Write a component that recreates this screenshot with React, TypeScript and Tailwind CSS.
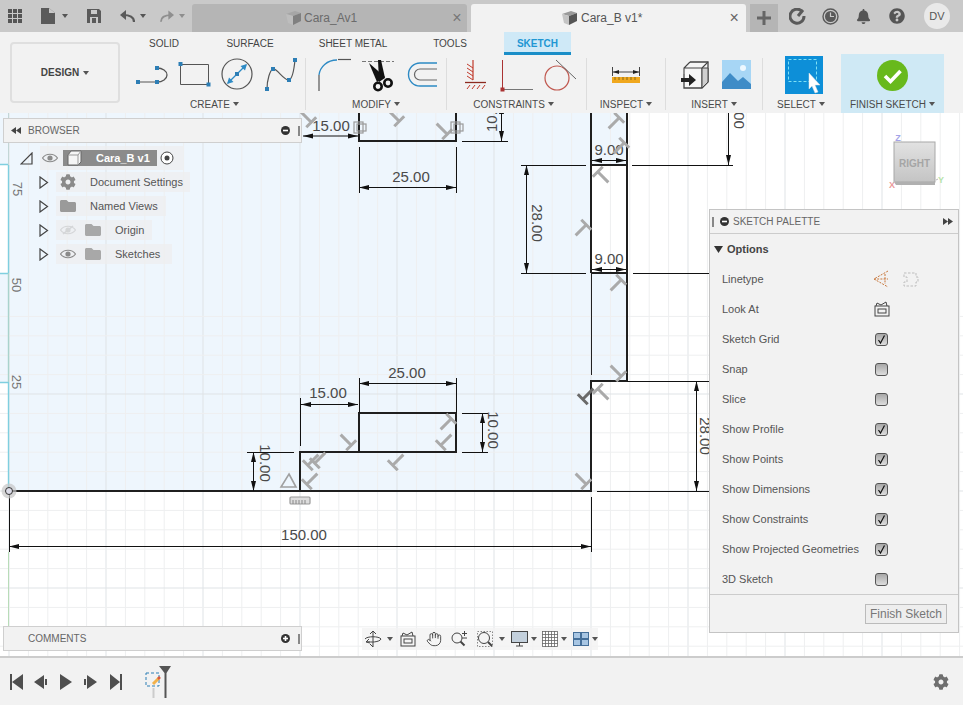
import { Hand } from "lucide-react";
import { FaBell, FaCog, FaQuestionCircle, FaFolder } from "react-icons/fa";

const font = { fontFamily: '"Liberation Sans", Arial, sans-serif' };

function Caret({ className = "" }: { className?: string }) {
  return (
    <svg width="6" height="4" viewBox="0 0 6 4" className={className}>
      <path d="M0 0H6L3 4Z" fill="#555" />
    </svg>
  );
}

function Cube({ dim = false }: { dim?: boolean }) {
  return (
    <svg width="17" height="16" viewBox="0 0 17 16" opacity={dim ? 0.55 : 1}>
      <path d="M1 4L10 1L16 3L8 6Z" fill="#9a9a9a" />
      <path d="M1 4L8 6V15L3 13Z" fill="#c4c4c4" />
      <path d="M8 6L16 3V11L8 15Z" fill="#555" />
    </svg>
  );
}

function Node({ x, y }: { x: number; y: number }) {
  return <rect x={x - 2} y={y - 2} width="4" height="4" fill="#2d7eb5" />;
}

/* ---------- ribbon ---------- */

function RibbonGroup({
  className,
  labelClass = "",
  label,
  children,
}: {
  className: string;
  labelClass?: string;
  label: string;
  children: React.ReactNode;
}) {
  return (
    <div className={"my-[3px] border-r border-[#dddddd] " + className}>
      <div className="flex h-[34px]">{children}</div>
      <div className={"mt-[5px] flex h-[14px] items-center justify-center gap-[3px] text-[10px] text-[#4a4a4a] " + labelClass}>
        {label}
        <Caret />
      </div>
    </div>
  );
}

function LineArcIcon() {
  return (
    <svg width="34" height="34" viewBox="0 0 34 34" fill="none">
      <path d="M3 24H22" stroke="#555" />
      <path d="M22 10A10 7 0 0 1 22 24" stroke="#555" strokeWidth="1.3" />
      <Node x={3} y={24} />
      <Node x={22} y={24} />
      <Node x={22} y={10} />
    </svg>
  );
}

function RectIcon() {
  return (
    <svg width="34" height="34" viewBox="0 0 34 34" fill="none">
      <path d="M2.5 6.5H30.5V26.5H2.5Z" stroke="#555" />
      <Node x={2.5} y={6} />
      <Node x={30.5} y={26.5} />
    </svg>
  );
}

function CircleIcon() {
  return (
    <svg width="34" height="34" viewBox="0 0 34 34" fill="none">
      <circle cx="16" cy="16" r="15" stroke="#555" strokeWidth="1.2" />
      <path d="M7 25L25 7" stroke="#2d8ac4" strokeWidth="1.3" />
      <path d="M26 6L19.5 8L24 12.5ZM6 26L12.5 24L8 19.5Z" fill="#2d8ac4" />
      <Node x={16} y={16} />
    </svg>
  );
}

function SplineIcon() {
  return (
    <svg width="34" height="34" viewBox="0 0 34 34" fill="none">
      <path d="M3 31C3 22 6 12 9 11C13 10 20 23 25 22C28 21 30 12 31 2" stroke="#555" strokeWidth="1.2" />
      <Node x={3} y={31} />
      <Node x={9} y={11} />
      <Node x={25} y={22} />
      <Node x={31} y={2} />
    </svg>
  );
}

function FilletIcon() {
  return (
    <svg width="34" height="34" viewBox="0 0 34 34" fill="none">
      <path d="M1 33V17" stroke="#555" strokeWidth="1.2" />
      <path d="M1 17C2 9 9 2 19 2" stroke="#2d8ac4" strokeWidth="1.3" />
      <path d="M20 1.5H33" stroke="#555" strokeWidth="1.2" />
    </svg>
  );
}

function ScissorsIcon() {
  return (
    <svg width="34" height="34" viewBox="0 0 34 34" fill="none">
      <path d="M0 3.5H32" stroke="#777" strokeDasharray="4 2" />
      <path d="M16 2H19L23 20L17 24Z" fill="#111" />
      <path d="M7 5L23 19L15 24Z" fill="#111" />
      <circle cx="16" cy="28.5" r="3.7" stroke="#111" strokeWidth="2.6" />
      <circle cx="26" cy="25" r="3.7" stroke="#111" strokeWidth="2.6" />
    </svg>
  );
}

function OffsetIcon() {
  return (
    <svg width="34" height="34" viewBox="0 0 34 34" fill="none">
      <path d="M31 5H14A11.5 11.5 0 0 0 14 28H31" stroke="#2d8ac4" strokeWidth="1.4" />
      <path d="M31 11H14A5.5 5.5 0 0 0 14 22H31" stroke="#666" strokeWidth="1.2" />
    </svg>
  );
}

function CoincidentIcon() {
  return (
    <svg width="26" height="34" viewBox="0 0 26 34" fill="none" stroke="#c0392b">
      <path d="M11 2V22" strokeWidth="1.2" />
      <path d="M5 6L11 10M5 10L11 14M5 14L11 18M5 18L11 22" />
      <path d="M3 24.5H24" stroke="#8c2a20" strokeWidth="1.3" />
      <path d="M5 31L8 27M10 31L13 27M15 31L18 27M20 31L23 27" />
    </svg>
  );
}

function PerpendicularIcon() {
  return (
    <svg width="34" height="34" viewBox="0 0 34 34" fill="none">
      <path d="M3.5 2V32" stroke="#a33" />
      <path d="M3.5 31.5H34" stroke="#777" />
      <rect x="1.5" y="29.5" width="4" height="4" fill="#a33" />
    </svg>
  );
}

function TangentIcon() {
  return (
    <svg width="34" height="34" viewBox="0 0 34 34" fill="none">
      <circle cx="13" cy="20" r="12" stroke="#c0584f" strokeWidth="1.2" />
      <path d="M12 2L32 21" stroke="#666" />
    </svg>
  );
}

function RulerIcon() {
  return (
    <svg width="30" height="34" viewBox="0 0 30 34" fill="none">
      <path d="M1.5 9V18M28.5 9V18" stroke="#444" />
      <path d="M2 14H28" stroke="#444" />
      <path d="M2 14L8 12V16ZM28 14L22 12V16Z" fill="#222" />
      <rect x="1" y="19" width="28" height="6" fill="#f0a81e" />
      <path d="M4 19V22M8 19V22M12 19V22M16 19V22M20 19V22M24 19V22" stroke="#8a6a12" />
    </svg>
  );
}

function InsertIcon() {
  return (
    <svg width="30" height="34" viewBox="0 0 30 34" fill="none">
      <path d="M10 4H28V24L22 30H4V16" fill="#f6f6f6" stroke="#444" strokeWidth="1.3" />
      <path d="M10 4L4 10V16M4 10H22V30M22 10L28 4" stroke="#444" strokeWidth="1.1" fill="none" />
      <path d="M22 10H28V24L22 30Z" fill="#cfcfcf" stroke="#444" />
      <path d="M1 20H9V16L16 22L9 28V24H1Z" fill="#222" />
    </svg>
  );
}

function ImageIcon() {
  return (
    <svg width="30" height="34" viewBox="0 0 30 34">
      <rect x="0" y="2" width="29" height="29" fill="#a7d6f5" />
      <circle cx="21" cy="10" r="3" fill="#eef8ff" />
      <path d="M0 24L8 15L16 23L21 19L29 26V31H0Z" fill="#3f8cc7" />
    </svg>
  );
}

function SelectIcon() {
  return (
    <svg width="38" height="38" viewBox="0 0 38 38">
      <rect width="38" height="38" fill="#0d8fd8" />
      <rect x="3.5" y="3.5" width="28" height="22" fill="none" stroke="#7fe0f5" strokeDasharray="3 2" />
      <path d="M24 17L35 29H30L33 36L30 37L27 30L24 33Z" fill="#fff" stroke="#ddd" strokeWidth=".5" />
    </svg>
  );
}

function Ribbon() {
  return (
    <div className="flex h-[81px] shrink-0 bg-[#f2f2f2]">
      <div className="w-[131px] shrink-0 pl-[10px] pt-[10px]">
        <div className="flex h-[61px] w-[110px] items-center justify-center gap-[4px] rounded-[4px] border-2 border-[#dfdfdf] text-[10px] font-bold text-[#444]">
          DESIGN
          <Caret />
        </div>
      </div>
      <div className="flex flex-col">
        <div className="flex h-[23px] text-[10px] text-[#444]">
          <div className="flex w-[66px] items-center justify-center">SOLID</div>
          <div className="flex w-[106px] items-center justify-center">SURFACE</div>
          <div className="flex w-[100px] items-center justify-center">SHEET METAL</div>
          <div className="flex w-[94px] items-center justify-center">TOOLS</div>
          <div className="ml-[7px] flex w-[67px] items-center justify-center border-b-[3px] border-[#1a8ec8] bg-[#cfe9f7] pt-[2px] font-bold text-[#1f97d3]">
            SKETCH
          </div>
        </div>
        <div className="flex h-[58px]">
          <RibbonGroup className="w-[175px]" labelClass="pr-[7px]" label="CREATE">
            <div className="flex gap-[9px] pl-[4px]">
              <LineArcIcon />
              <RectIcon />
              <CircleIcon />
              <SplineIcon />
            </div>
          </RibbonGroup>
          <RibbonGroup className="w-[141px]" label="MODIFY">
            <div className="flex gap-[10px] pl-[12px]">
              <FilletIcon />
              <ScissorsIcon />
              <OffsetIcon />
            </div>
          </RibbonGroup>
          <RibbonGroup className="w-[140px]" labelClass="pr-[6px]" label="CONSTRAINTS">
            <div className="flex gap-[11px] pl-[15px]">
              <CoincidentIcon />
              <PerpendicularIcon />
              <TangentIcon />
            </div>
          </RibbonGroup>
          <RibbonGroup className="w-[79px]" label="INSPECT">
            <div className="flex w-full justify-center">
              <RulerIcon />
            </div>
          </RibbonGroup>
          <RibbonGroup className="w-[97px]" label="INSERT">
            <div className="flex gap-[12px] pl-[14px]">
              <InsertIcon />
              <ImageIcon />
            </div>
          </RibbonGroup>
          <div className="my-[1px] w-[78px]">
            <div className="flex h-[38px] justify-center pl-[3px]">
              <SelectIcon />
            </div>
            <div className="mt-[3px] flex h-[14px] items-center justify-center gap-[3px] pr-[2px] text-[10px] text-[#4a4a4a]">
              SELECT
              <Caret />
            </div>
          </div>
          <div className="-mt-px w-[103px] bg-[#cfe9f5]">
            <div className="flex h-[37px] items-end justify-center">
              <svg width="31" height="31" viewBox="0 0 31 31">
                <circle cx="15.5" cy="15.5" r="15.5" fill="#68b91c" />
                <path d="M8 16L13.5 21.5L23.5 11" fill="none" stroke="#fff" strokeWidth="3.6" />
              </svg>
            </div>
            <div className="mt-[6px] flex h-[14px] items-center justify-center gap-[3px] text-[10px] text-[#4a4a4a]">
              FINISH SKETCH
              <Caret />
            </div>
          </div>
        </div>
      </div>
    </div>
  );
}

/* ---------- top bar ---------- */

function TopBar() {
  return (
    <div className="flex h-8 shrink-0 bg-[#c9c9c9]">
      <div className="flex w-[192px] shrink-0 items-center">
        <svg width="15" height="15" viewBox="0 0 15 15" className="ml-[8px]" fill="#555">
          {[0, 5, 10].map((x) =>
            [0, 5, 10].map((y) => <rect key={x + "-" + y} x={x} y={y} width="4" height="4" />)
          )}
        </svg>
        <svg width="14" height="16" viewBox="0 0 14 16" className="ml-[18px]">
          <path d="M0 0H8L14 5V16H0Z" fill="#5a5a5a" />
          <path d="M8 0V5H14Z" fill="#c9c9c9" />
        </svg>
        <Caret className="ml-[7px]" />
        <svg width="14" height="14" viewBox="0 0 14 14" className="ml-[19px]">
          <path d="M0 0H12L14 2V14H0Z" fill="#5a5a5a" />
          <rect x="4" y="1" width="6" height="4" fill="#c9c9c9" />
          <rect x="3" y="8" width="8" height="6" fill="#c9c9c9" />
          <rect x="5" y="9" width="4" height="5" fill="#5a5a5a" />
        </svg>
        <svg width="15" height="13" viewBox="0 0 15 13" fill="none" className="ml-[19px]">
          <path d="M14 12C14 7 10 5 3 5" stroke="#5a5a5a" strokeWidth="2.2" />
          <path d="M6 0L0 5L6 10Z" fill="#5a5a5a" />
        </svg>
        <Caret className="ml-[5px]" />
        <svg width="14" height="13" viewBox="0 0 15 13" fill="none" className="ml-[14px]">
          <path d="M1 12C1 7 5 5 12 5" stroke="#8f8f8f" strokeWidth="2" />
          <path d="M9 0L15 5L9 10Z" fill="#8f8f8f" />
        </svg>
        <Caret className="ml-[5px] opacity-50" />
      </div>
      <div className="mt-[4px] flex w-[275px] items-center rounded-t-[3px] bg-[#b5b5b5] pl-[93px] text-[12px] text-[#6b6b6b]">
        <Cube dim />
        <span className="ml-[2px]">Cara_Av1</span>
        <span className="ml-[95px] text-[16px] leading-none text-[#777]">×</span>
      </div>
      <div className="ml-[4px] mt-[4px] flex w-[275px] items-center rounded-t-[3px] bg-[#f2f2f2] pl-[90px] text-[12px] text-[#555]">
        <Cube />
        <span className="ml-[3px]">Cara_B v1*</span>
        <span className="ml-[87px] text-[16px] leading-none text-[#666]">×</span>
      </div>
      <div className="ml-[4px] mt-[4px] flex h-[28px] w-[28px] items-center justify-center bg-[#b5b5b5]">
        <svg width="14" height="14" viewBox="0 0 14 14">
          <path d="M5.5 0H8.5V5.5H14V8.5H8.5V14H5.5V8.5H0V5.5H5.5Z" fill="#666" />
        </svg>
      </div>
      <div className="ml-[3px] flex items-center">
        <div className="flex w-[33px] justify-center">
          <svg width="17" height="17" viewBox="0 0 17 17" fill="none">
            <path d="M12.5 2.8A7 7 0 1 0 15 8" stroke="#5a5a5a" strokeWidth="3" />
            <path d="M9 8L14 2" stroke="#5a5a5a" strokeWidth="3" />
          </svg>
        </div>
        <div className="flex w-[33px] justify-center">
          <svg width="17" height="17" viewBox="0 0 17 17" fill="none">
            <circle cx="8.5" cy="8.5" r="7.5" stroke="#5a5a5a" strokeWidth="1.4" />
            <circle cx="8.5" cy="8.5" r="5.5" fill="#5a5a5a" />
            <path d="M8.5 4.5V8.5H12" stroke="#c9c9c9" strokeWidth="1.2" />
          </svg>
        </div>
        <div className="flex w-[33px] justify-center">
          <FaBell size={15} color="#555" />
        </div>
        <div className="flex w-[33px] justify-center">
          <FaQuestionCircle size={16} color="#555" />
        </div>
        <div className="ml-[11px] flex h-[26px] w-[26px] items-center justify-center rounded-full bg-[#e9e9e9] text-[11px] text-[#555]">
          DV
        </div>
      </div>
    </div>
  );
}

/* ---------- sketch drawing ---------- */

function Perp({ x, y, a, c = "#aaaaaa" }: { x: number; y: number; a: number; c?: string }) {
  return (
    <path
      d="M-7 -6H7M0 -6V9"
      transform={`translate(${x} ${y}) rotate(${a})`}
      fill="none"
      stroke={c}
      strokeWidth="3"
    />
  );
}

function HDim({ x1, x2, y }: { x1: number; x2: number; y: number }) {
  return (
    <g>
      <path d={`M${x1} ${y}H${x2}`} stroke="#111" />
      <path d={`M${x1} ${y}l10 -2.5v5zM${x2} ${y}l-10 -2.5v5z`} fill="#111" />
    </g>
  );
}

function VDim({ y1, y2, x }: { y1: number; y2: number; x: number }) {
  return (
    <g>
      <path d={`M${x} ${y1}V${y2}`} stroke="#111" />
      <path d={`M${x} ${y1}l-2.5 10h5zM${x} ${y2}l-2.5 -10h5z`} fill="#111" />
    </g>
  );
}

function DimText({ x, y, t, rot = 0 }: { x: number; y: number; t: string; rot?: number }) {
  return (
    <text
      x={x}
      y={y}
      textAnchor={rot === -90 ? "start" : "middle"}
      fontSize="15"
      fill="#4a4a4a"
      transform={rot ? `rotate(${rot} ${x} ${y})` : undefined}
    >
      {t}
    </text>
  );
}

function SquareMark({ x, y }: { x: number; y: number }) {
  return (
    <g fill="none" stroke="#9a9a9a" strokeWidth="1.2">
      <rect x={x - 4} y={y - 5} width="9" height="11" />
      <rect x={x - 1} y={y - 3} width="9" height="7" />
    </g>
  );
}

function SketchCanvas() {
  const xs = Array.from({ length: 50 }, (_, i) => i);
  const ys = Array.from({ length: 30 }, (_, i) => i - 9);
  return (
    <svg className="absolute inset-0 h-full w-full" viewBox="0 113 963 543" preserveAspectRatio="xMinYMin slice" style={font}>
      <defs>
        <linearGradient id="cubeFace" x1="0" y1="0" x2="0" y2="1">
          <stop offset="0" stopColor="#e2e2e2" />
          <stop offset="1" stopColor="#c4c4c4" />
        </linearGradient>
      </defs>

      {/* sketch profile fill */}
      <path
        d="M9 113H627V381H591V491H9ZM0 113H8V165H0ZM0 273H8V382H0Z"
        fill="#eef6fd"
      />
      <path d="M592 165H627V273H592Z" fill="#ffffff" />

      {/* grid */}
      {xs.map((i) => (
        <line
          key={i}
          x1={9 + i * 19.4}
          x2={9 + i * 19.4}
          y1="113"
          y2="656"
          stroke={i % 5 === 0 ? "#dfe3e6" : "#eeeff0"}
        />
      ))}
      {ys.map((i) => (
        <line
          key={i}
          x1="0"
          x2="963"
          y1={491 + i * 19.4}
          y2={491 + i * 19.4}
          stroke={i % 5 === 0 ? "#dfe3e6" : "#eeeff0"}
        />
      ))}

      {/* axes and frame of the projected part */}
      <path d="M8.5 552V640" stroke="#b8dcb8" />
      <path d="M8.5 113V165" stroke="#c3d6d6" />
      <path d="M8.5 165V273M8.5 382V491M0 164.5H8M0 273.5H8M0 382.5H8" stroke="#7fcfdf" strokeWidth="1.4" />
      <path d="M8.5 273V382" stroke="#a9d3cc" strokeWidth="1.4" />

      {/* axis numbers */}
      <g fontSize="13" fill="#777">
        <text x="13" y="189" textAnchor="middle" transform="rotate(90 13 189)">75</text>
        <text x="12" y="285" textAnchor="middle" transform="rotate(90 12 285)">50</text>
        <text x="12" y="382" textAnchor="middle" transform="rotate(90 12 382)">25</text>
      </g>

      {/* profile */}
      <g fill="none" stroke="#1f1f1f" strokeWidth="2">
        <path d="M9 491H591V381H627V113" />
        <path d="M591 113V273M591 165H627M591 273H627" />
        <path d="M359 113V141H456V113" />
        <path d="M300 491V452H456V413H359V452" />
      </g>
      <path d="M591.5 273V375" stroke="#222" fill="none" />

      {/* extension lines */}
      <g stroke="#111" fill="none" shapeRendering="crispEdges">
        <path d="M359 147V193M456 147V193" />
        <path d="M462 141H508" />
        <path d="M521 165H586M632 165H733M521 273H586M633 273H709" />
        <path d="M627 381H709M597 491H709" />
        <path d="M359 378V413M456 378V413M300 398V446" />
        <path d="M462 413H488M462 452H488M247 452H294" />
        <path d="M9 491V552M591 497V552" />
      </g>

      {/* dimension arrows */}
      <HDim x1={303} x2={358} y={136} />
      <HDim x1={359} x2={456} y={187.5} />
      <VDim y1={104} y2={141} x={501.5} />
      <VDim y1={165} y2={273} x={526.5} />
      <VDim y1={100} y2={165} x={728.5} />
      <HDim x1={592} x2={626} y={160.5} />
      <HDim x1={592} x2={626} y={269.5} />
      <VDim y1={381} y2={491} x={696.5} />
      <HDim x1={359} x2={456} y={383.5} />
      <HDim x1={301} x2={358} y={404.5} />
      <VDim y1={413} y2={452} x={482.5} />
      <VDim y1={452} y2={491} x={253.5} />
      <HDim x1={9} x2={591} y={546.5} />

      {/* dimension texts */}
      <DimText x={331} y={131} t="15.00" />
      <DimText x={411} y={182} t="25.00" />
      <DimText x={497} y={132} t="10.00" rot={-90} />
      <DimText x={532} y={223} t="28.00" rot={90} />
      <DimText x={734} y={110} t="10.00" rot={90} />
      <DimText x={609} y={155} t="9.00" />
      <DimText x={609} y={264} t="9.00" />
      <DimText x={700} y={436} t="28.00" rot={90} />
      <DimText x={407} y={378} t="25.00" />
      <DimText x={328} y={398} t="15.00" />
      <DimText x={488} y={430} t="10.00" rot={90} />
      <DimText x={260} y={463} t="10.00" rot={90} />
      <DimText x={304} y={540} t="150.00" />

      {/* constraint glyphs */}
      <Perp x={307} y={118} a={135} />
      <Perp x={395} y={117} a={135} />
      <Perp x={443} y={130} a={135} />
      <Perp x={615} y={122} a={45} />
      <Perp x={620} y={147} a={45} />
      <Perp x={602} y={176} a={-45} />
      <Perp x={582} y={229} a={45} />
      <Perp x={617} y={284} a={45} />
      <Perp x={617} y={372} a={135} />
      <Perp x={602} y={393} a={-45} />
      <Perp x={587} y={395} a={225} c="#6a6a6a" />
      <Perp x={347} y={441} a={135} />
      <Perp x={447} y={423} a={45} />
      <Perp x={445} y={441} a={225} />
      <Perp x={397} y={461} a={225} />
      <Perp x={312} y={461} a={225} />
      <Perp x={319} y={459} a={225} />
      <Perp x={311} y={480} a={225} />
      <Perp x={582} y={480} a={135} />
      <SquareMark x={358} y={127} />
      <SquareMark x={455} y={127} />

      {/* ground and fix marks */}
      <path d="M289 474L296 487H281Z" fill="none" stroke="#a0a0a0" strokeWidth="1.6" />
      <rect x="290" y="497" width="20" height="7" rx="1" fill="#ddd" stroke="#9a9a9a" strokeWidth="1.2" />
      <path d="M293 500V504M296 500V504M299 500V504M302 500V504M305 500V504" stroke="#888" />

      {/* origin */}
      <circle cx="9" cy="491" r="7.5" fill="#c6c6c6" opacity=".7" />
      <circle cx="9" cy="491" r="3.5" fill="#dcdce8" stroke="#333" />

      {/* view cube */}
      <rect x="894" y="142" width="41" height="40" fill="url(#cubeFace)" stroke="#a8a8a8" />
      <path d="M894 182L896 185H935V182Z" fill="#b0b0b0" />
      <text x="914.5" y="167" textAnchor="middle" fontSize="10" fontWeight="700" fill="#a5a5a5">RIGHT</text>
      <text x="898" y="141" textAnchor="middle" fontSize="9" fontWeight="700" fill="#a3a3e8">Z</text>
      <text x="892" y="188" textAnchor="middle" fontSize="9" fontWeight="700" fill="#eb9a9a">X</text>
      <text x="941" y="183" textAnchor="middle" fontSize="9" fontWeight="700" fill="#b6e3a9">Y</text>
      <path d="M893 183L895 181M936 180L938 179" stroke="#bbb" />
    </svg>
  );
}

/* ---------- browser and comments ---------- */

function Eye({ off = false }: { off?: boolean }) {
  return (
    <svg width="16" height="10" viewBox="0 0 16 10" fill="none" opacity={off ? 0.25 : 1}>
      <path d="M.5 5C4 0 12 0 15.5 5C12 10 4 10 .5 5Z" stroke="#8a8a8a" strokeWidth="1.2" />
      <circle cx="8" cy="5" r="2.6" fill="#8a8a8a" />
      {off && <path d="M3 9L13 1" stroke="#8a8a8a" strokeWidth="1.6" />}
    </svg>
  );
}

function Chevron() {
  return (
    <svg width="10" height="13" viewBox="0 0 10 13" className="shrink-0">
      <path d="M1 1L8.5 6.5L1 12Z" fill="none" stroke="#444" strokeWidth="1.2" />
    </svg>
  );
}

function BrowserTree() {
  return (
    <div className="absolute left-[19px] top-[33px] flex flex-col text-[11px] text-[#555]">
      <div className="flex h-[24px] items-center">
        <svg width="13" height="13" viewBox="0 0 13 13" className="ml-[1px]">
          <path d="M12 1V12H1Z" fill="none" stroke="#444" strokeWidth="1.2" />
        </svg>
        <div className="ml-[7px] flex h-[24px] w-[143px] items-center bg-[#eeeeee]/70">
          <div className="ml-[2px]"><Eye /></div>
          <div className="ml-[5px] flex h-[16px] w-[94px] items-center bg-[#8b8b8b]">
            <svg width="16" height="16" viewBox="0 0 16 16" className="ml-[3px] shrink-0">
              <path d="M2 5L5 1H15V12L12 15H2Z" fill="#f5f5f5" stroke="#666" />
              <path d="M2 5H12V15M12 5L15 1" fill="none" stroke="#999" />
            </svg>
            <span className="ml-[14px] font-bold text-white">Cara_B v1</span>
          </div>
          <svg width="14" height="14" viewBox="0 0 14 14" className="ml-[3px]">
            <circle cx="7" cy="7" r="6" fill="#fff" stroke="#444" />
            <circle cx="7" cy="7" r="2.5" fill="#444" />
          </svg>
        </div>
      </div>
      <TreeRow icon={<FaCog size={16} color="#8a8a8a" />} label="Document Settings" className="w-[134px]" />
      <TreeRow icon={<FaFolder size={16} color="#9a9a9a" />} label="Named Views" className="w-[110px]" />
      <TreeRow eyeOff icon={<FaFolder size={16} color="#a8a8a8" />} label="Origin" className="w-[96px]" />
      <TreeRow eyeOn icon={<FaFolder size={16} color="#a8a8a8" />} label="Sketches" className="w-[116px]" />
    </div>
  );
}

function TreeRow({ icon, label, className, eyeOff, eyeOn }: { icon: React.ReactNode; label: string; className: string; eyeOff?: boolean; eyeOn?: boolean }) {
  const hasEye = eyeOff || eyeOn;
  return (
    <div className="flex h-[24px] items-center">
      <div className="ml-[20px]">
        <Chevron />
      </div>
      <div className={"ml-[7px] flex h-[20px] items-center bg-[#eeeeee]/70 " + className}>
        {hasEye ? (
          <>
            <div className="ml-[4px]"><Eye off={eyeOff} /></div>
            <div className="ml-[9px]">{icon}</div>
            <span className="ml-[14px]">{label}</span>
          </>
        ) : (
          <>
            <div className="ml-[4px]">{icon}</div>
            <span className="ml-[14px]">{label}</span>
          </>
        )}
      </div>
    </div>
  );
}

function Round({ plus = false }: { plus?: boolean }) {
  return (
    <svg width="9" height="9" viewBox="0 0 9 9">
      <circle cx="4.5" cy="4.5" r="4.5" fill="#333" />
      <rect x="2" y="3.7" width="5" height="1.6" fill="#fff" />
      {plus && <rect x="3.7" y="2" width="1.6" height="5" fill="#fff" />}
    </svg>
  );
}

function SideBar({ title, plus, top }: { title: string; plus?: boolean; top: string }) {
  return (
    <div className={"absolute left-[3px] flex h-[25px] w-[299px] items-center border border-[#cfcfcf] bg-[#f2f2f2] text-[10px] text-[#666] " + top}>
      <div className="flex w-[24px] justify-center">
        {!plus && (
          <svg width="10" height="7" viewBox="0 0 10 7">
            <path d="M5 0L0 3.5L5 7ZM10 0L5 3.5L10 7Z" fill="#444" />
          </svg>
        )}
      </div>
      <span>{title}</span>
      <div className="ml-auto mr-[1px] flex items-center">
        <Round plus={plus} />
        <div className="ml-[8px] h-[10px] w-[2px] border-x border-[#888]" />
      </div>
    </div>
  );
}

/* ---------- nav toolbar ---------- */

function NavBar() {
  return (
    <div className="absolute left-[362px] top-[515px] flex h-[22px] w-[236px] items-center bg-[#f2f2f2]/80">
      <svg width="18" height="18" viewBox="0 0 18 18" fill="none" stroke="#444" className="ml-[2px]">
        <path d="M9 1V17M6 4L9 1L12 4M6 14L9 17" />
        <path d="M1 9C3 6 15 6 17 9C16 12 6 13 3 11" />
        <path d="M5 9L2 12L6 13" />
      </svg>
      <Caret className="ml-[5px]" />
      <svg width="16" height="16" viewBox="0 0 16 16" fill="none" stroke="#444" className="ml-[7px]">
        <rect x="1" y="5" width="14" height="10" />
        <rect x="4" y="8" width="8" height="4" />
        <path d="M2 5L3 2L7 4L12 1L13 5" />
      </svg>
      <Hand size={16} color="#444" strokeWidth={1.4} className="ml-[10px]" />
      <svg width="17" height="16" viewBox="0 0 17 16" fill="none" stroke="#444" className="ml-[9px]">
        <circle cx="6" cy="7" r="5" />
        <path d="M9.5 10.5L13.5 14.5" strokeWidth="2" />
        <path d="M11 2.5H16M13.5 0V5M11 7H16" />
      </svg>
      <svg width="17" height="17" viewBox="0 0 17 17" fill="none" className="ml-[9px]">
        <rect x=".5" y=".5" width="15" height="15" stroke="#888" strokeDasharray="1.5 1.5" />
        <circle cx="7" cy="7" r="5.5" stroke="#444" />
        <path d="M11 11L15 15" stroke="#444" strokeWidth="2" />
      </svg>
      <Caret className="ml-[5px]" />
      <svg width="17" height="16" viewBox="0 0 17 16" className="ml-[6px]">
        <rect x=".5" y=".5" width="16" height="11" fill="#c3d0dc" stroke="#444" />
        <path d="M5 15H12M8.5 12V15" stroke="#444" fill="none" />
      </svg>
      <Caret className="ml-[3px]" />
      <svg width="16" height="16" viewBox="0 0 16 16" className="ml-[5px]" fill="#fff" stroke="#666" strokeWidth=".8">
        <rect x=".5" y=".5" width="15" height="15" />
        <path d="M3.5 0V16M6.5 0V16M9.5 0V16M12.5 0V16M0 3.5H16M0 6.5H16M0 9.5H16M0 12.5H16" />
      </svg>
      <Caret className="ml-[3px]" />
      <svg width="16" height="14" viewBox="0 0 16 14" className="ml-[6px]" fill="#a8c6e3" stroke="#456f99">
        <rect x=".5" y=".5" width="7" height="6" />
        <rect x="8.5" y=".5" width="7" height="6" />
        <rect x=".5" y="7.5" width="7" height="6" />
        <rect x="8.5" y="7.5" width="7" height="6" />
      </svg>
      <Caret className="ml-[3px]" />
    </div>
  );
}

/* ---------- sketch palette ---------- */

const options: { label: string; checked?: boolean }[] = [
  { label: "Sketch Grid", checked: true },
  { label: "Snap" },
  { label: "Slice" },
  { label: "Show Profile", checked: true },
  { label: "Show Points", checked: true },
  { label: "Show Dimensions", checked: true },
  { label: "Show Constraints", checked: true },
  { label: "Show Projected Geometries", checked: true },
  { label: "3D Sketch" },
];

function CheckBox({ checked }: { checked?: boolean }) {
  return (
    <div className="flex h-[13px] w-[13px] items-center justify-center rounded-[3px] border border-[#555] bg-linear-to-b from-[#a8a8a8] to-[#dedede]">
      {checked && (
        <svg width="11" height="11" viewBox="0 0 11 11">
          <path d="M2.5 6L4.5 9L8.5 1.5" fill="none" stroke="#111" strokeWidth="1.2" />
        </svg>
      )}
    </div>
  );
}

function PaletteRow({ label, children }: { label: string; children: React.ReactNode }) {
  return (
    <div className="flex h-[30px] items-center pl-[12px] text-[11px] text-[#555]">
      <span className="w-[153px]">{label}</span>
      {children}
    </div>
  );
}

function SketchPalette() {
  return (
    <div className="absolute left-[709px] top-[96px] flex w-[250px] flex-col border border-[#c4c4c4] bg-[#f2f2f2]">
      <div className="flex h-[24px] items-center border-b border-[#cccccc] text-[10px] text-[#666]">
        <div className="ml-[2px] h-[10px] w-[2px] border-x border-[#888]" />
        <div className="ml-[6px] flex"><Round /></div>
        <span className="ml-[4px]">SKETCH PALETTE</span>
        <svg width="10" height="7" viewBox="0 0 10 7" className="ml-auto mr-[5px]">
          <path d="M0 0L5 3.5L0 7ZM5 0L10 3.5L5 7Z" fill="#444" />
        </svg>
      </div>
      <div className="flex h-[30px] items-center pl-[4px] text-[11px] font-bold text-[#444]">
        <svg width="9" height="7" viewBox="0 0 9 7">
          <path d="M0 0H9L4.5 7Z" fill="#333" />
        </svg>
        <span className="ml-[4px]">Options</span>
      </div>
      <PaletteRow label="Linetype">
        <svg width="18" height="18" viewBox="0 0 18 18" fill="none" className="-ml-[2px]">
          <path d="M15 1L1 9L15 17M12 4V14M1 9H15" stroke="#c8763a" strokeDasharray="2 1.2" />
        </svg>
        <svg width="17" height="17" viewBox="0 0 17 17" fill="none" className="ml-[11px]">
          <path d="M2 2H14V6H16V11H14V15H2V11H5V6H2Z" stroke="#bdbdbd" strokeDasharray="2.5 1.5" />
        </svg>
      </PaletteRow>
      <PaletteRow label="Look At">
        <svg width="16" height="16" viewBox="0 0 16 16" fill="none" stroke="#444" className="-ml-[1px]">
          <rect x="1" y="5" width="14" height="10" />
          <rect x="4" y="8" width="8" height="4" />
          <path d="M2 5L3 2L7 4L12 1L13 5" />
        </svg>
      </PaletteRow>
      {options.map((o) => (
        <PaletteRow key={o.label} label={o.label}>
          <CheckBox checked={o.checked} />
        </PaletteRow>
      ))}
      <div className="flex h-[38px] items-center justify-end border-t border-[#cccccc] pr-[11px]">
        <div className="flex h-[20px] w-[82px] items-center justify-center border border-[#bbbbbb] bg-[#eeeeee] text-[12px] text-[#777]">
          Finish Sketch
        </div>
      </div>
    </div>
  );
}

/* ---------- timeline ---------- */

function Timeline() {
  return (
    <div className="flex h-[49px] shrink-0 items-center border-t-2 border-[#cccccc] bg-[#f2f2f2]">
      <svg width="122" height="18" viewBox="0 0 122 18" fill="#4f4f4f" className="ml-[10px]">
        <path d="M0 1H2V17H0ZM13 1V17L2 9Z" />
        <path d="M24 9L34 2V16ZM35 6H37V12H35Z" />
        <path d="M50 1L62 9L50 17Z" />
        <path d="M74 6H76V12H74ZM77 2L87 9L77 16Z" />
        <path d="M100 1L110 9L100 17ZM110 1H112V17H110Z" />
      </svg>
      <svg width="32" height="38" viewBox="0 0 32 38" className="ml-[13px] mt-[3px]" fill="none">
        <rect x="1" y="9" width="13" height="13" stroke="#2d7eb5" strokeDasharray="3 2" />
        <path d="M8 20L14 14" stroke="#f2b14a" strokeWidth="3" />
        <path d="M13 15L15 13" stroke="#d9583f" strokeWidth="2.5" />
        <path d="M8.5 24V34" stroke="#ccc" strokeWidth="2" />
        <path d="M14 2H26L21.5 9V34H19.5V9Z" fill="#555" />
      </svg>
      <div className="ml-auto mr-[14px] flex">
        <FaCog size={16} color="#6f6f6f" />
      </div>
    </div>
  );
}

export default function App() {
  return (
    <div className="flex h-[705px] w-[963px] flex-col overflow-hidden bg-white" style={font}>
      <TopBar />
      <Ribbon />
      <div className="relative flex-1 overflow-hidden bg-white">
        <SketchCanvas />
        <SideBar title="BROWSER" top="top-[5px]" />
        <BrowserTree />
        <SideBar title="COMMENTS" plus top="top-[513px]" />
        <NavBar />
        <SketchPalette />
      </div>
      <Timeline />
    </div>
  );
}
